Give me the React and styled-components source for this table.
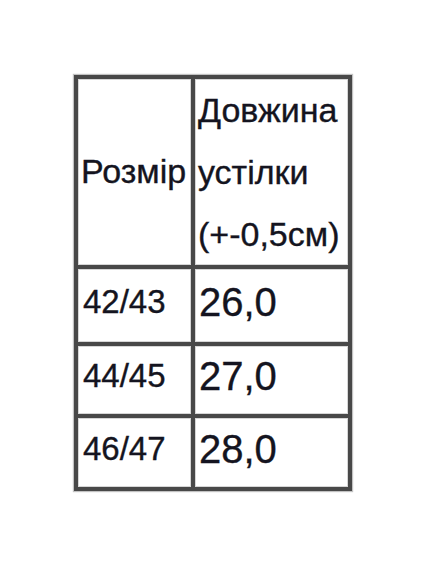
import styled, { createGlobalStyle } from "styled-components";

const GlobalStyle = createGlobalStyle`
  html, body {
    margin: 0;
    padding: 0;
    background: #fff;
  }
  body {
    font-family: "Liberation Sans", Arial, sans-serif;
  }
`;

const Page = styled.div`
  width: 428px;
  height: 570px;
  padding: 75px 0 0 74px;
  box-sizing: border-box;
`;

// сітка з темним фоном: проміжки між клітинками і є лініями таблиці
const SizeTable = styled.div`
  display: grid;
  grid-template-columns: 113px 153px;
  grid-template-rows: 186px 73px 68px 69px;
  gap: 4px;
  padding: 4px;
  width: max-content;
  background-color: #484848;
  box-shadow: 0 0 1px 1px rgba(80, 80, 80, 0.35);
`;

const Cell = styled.div`
  display: flex;
  flex-direction: column;
  justify-content: center;
  background-color: #fff;
  box-shadow: inset 0 0 0 1px #d6d6d6;
  padding-left: ${(props) => props.$pad || "4px"};
  padding-bottom: ${(props) => props.$bottom || "0"};
  color: #141420;
  font-size: ${(props) => props.$size || "33px"};
  line-height: ${(props) => props.$lh || "1.15"};
  -webkit-text-stroke: 0.35px #141420;
  white-space: nowrap;
  overflow: hidden;
`;

const rows = [
  ["42/43", "26,0"],
  ["44/45", "27,0"],
  ["46/47", "28,0"],
];

const App = () => {
  return (
    <>
      <GlobalStyle />
      <Page>
        <SizeTable>
          <Cell $pad="3px" $size="34px">
            Розмір
          </Cell>
          <Cell $pad="3px" $size="34px" $lh="62px">
            <span>Довжина</span>
            <span>устілки</span>
            <span>(+-0,5см)</span>
          </Cell>
          {rows.map(([size, length]) => (
            <>
              <Cell key={size} $pad="5px" $bottom="8px">
                {size}
              </Cell>
              <Cell key={length} $pad="4px" $size="40px" $bottom="8px">
                {length}
              </Cell>
            </>
          ))}
        </SizeTable>
      </Page>
    </>
  );
};

export default App;
